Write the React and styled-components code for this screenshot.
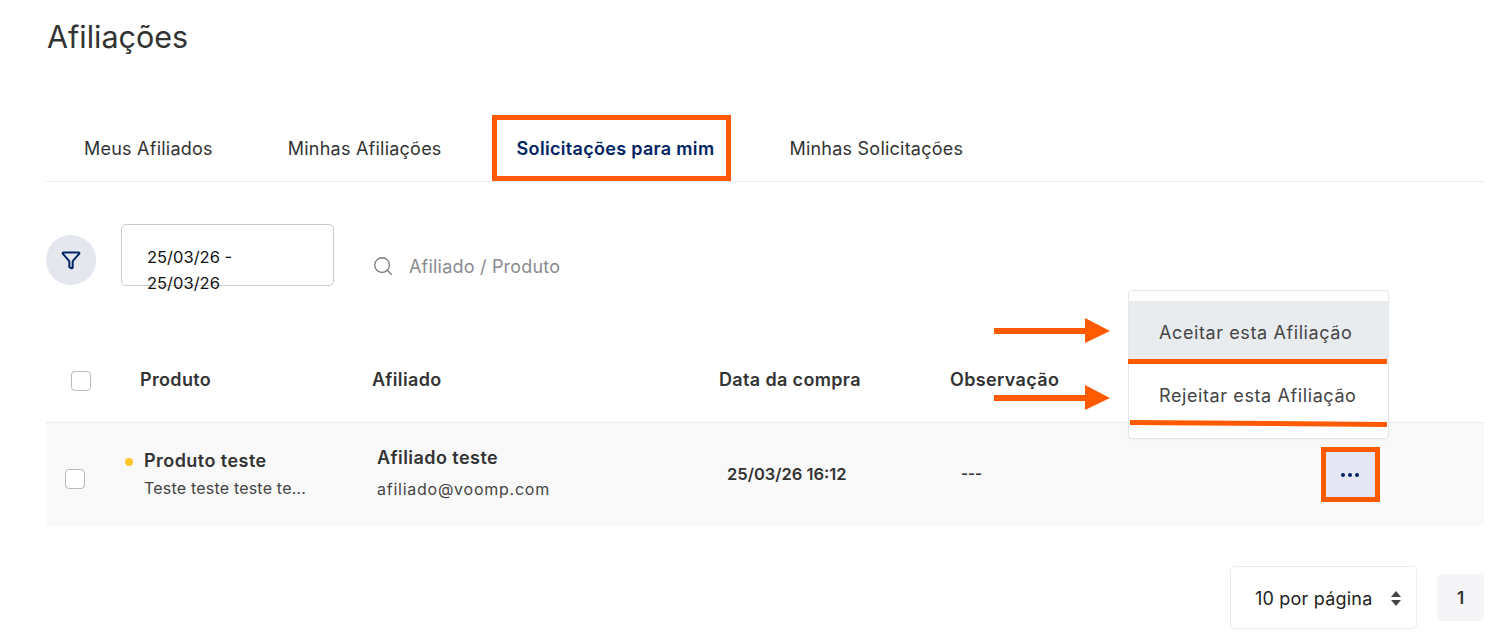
import React from "react";
import styled, { createGlobalStyle } from "styled-components";
import { Filter, Search } from "lucide-react";

const GlobalStyle = createGlobalStyle`
  html, body {
    margin: 0;
    background: #fff;
    font-family: "Inter", "Noto Sans", sans-serif;
    color: #333;
  }
  * { box-sizing: border-box; }
`;

const ORANGE = "#ff5a00";
const NAVY = "#002363";

const Page = styled.div`
  padding: 0 16px 12px 46px;
  height: 641px;
  overflow: hidden;
`;

const Title = styled.h1`
  margin: 0;
  padding: 1px 0 0 1px;
  height: 115px;
  font-size: 30.5px;
  line-height: 72px;
  font-weight: 400;
  color: #333;
`;

const Tabs = styled.nav`
  display: flex;
  height: 67px;
  border-bottom: 1px solid #ededf0;
`;

const Tab = styled.div`
  position: relative;
  display: flex;
  align-items: center;
  padding: 0 38px 0 ${(p) => (p.$first ? 38 : 37)}px;
  font-size: 18px;
  font-weight: ${(p) => (p.$active ? 600 : 400)};
  color: ${(p) => (p.$active ? NAVY : "#333")};
  letter-spacing: ${(p) => (p.$active ? "0.31px" : "0.23px")};
  white-space: nowrap;
`;

const Highlight = styled.span`
  position: absolute;
  border: 5px solid ${ORANGE};
  pointer-events: none;
`;

const TabHighlight = styled(Highlight)`
  left: 12px;
  right: 21px;
  top: 0;
  bottom: 0;
`;

const FilterRow = styled.div`
  display: flex;
  align-items: flex-start;
  margin-top: 42px;
  height: 62px;
`;

const FilterButton = styled.button`
  display: flex;
  align-items: center;
  justify-content: center;
  width: 50px;
  height: 50px;
  margin: 11px 25px 0 0;
  padding: 0;
  border: 0;
  border-radius: 50%;
  background: #e5e7ef;
  color: ${NAVY};
`;

const DateBox = styled.div`
  width: 213px;
  height: 62px;
  padding: 19px 60px 0 25px;
  border: 1px solid #ccc;
  border-radius: 5px;
  font-size: 16.5px;
  line-height: 26px;
  color: #111;
`;

const SearchBox = styled.div`
  display: flex;
  align-items: center;
  gap: 15px;
  margin: 29px 0 0 38px;
  padding-top: 2px;
  font-size: 18px;
  letter-spacing: 0.2px;
  color: #8a8a8f;
`;

const HeaderRow = styled.div`
  display: grid;
  grid-template-columns: 94px 232px 347px 231px 1fr;
  align-items: center;
  height: 74px;
  margin-top: 62px;
  padding-bottom: 12px;
  font-size: 18px;
  letter-spacing: 0.35px;
  font-weight: 600;
  color: #333;
`;

const Check = styled.span`
  display: block;
  width: 20px;
  height: 20px;
  border: 1px solid #b5b9c4;
  border-radius: 4px;
  background: #fff;
`;

const HeaderCheck = styled(Check)`
  margin: 4px 0 0 25px;
`;

const BodyRow = styled.div`
  position: relative;
  display: grid;
  grid-template-columns: 79px 252px 350px 233px 1fr 160px;
  align-items: center;
  height: 104px;
  background: #f9f9f9;
  border-top: 1px solid #ebebeb;
`;

const BodyCheck = styled(Check)`
  margin: 9px 0 0 19px;
`;

const ProductCell = styled.div`
  position: relative;
  padding-left: 19px;
`;

const Dot = styled.span`
  position: absolute;
  left: 0;
  top: 9px;
  width: 8px;
  height: 8px;
  border-radius: 50%;
  background: #ffc52e;
`;

const AffiliateCell = styled.div`
  padding-bottom: 3px;
`;

const CellTitle = styled.div`
  font-size: 18px;
  line-height: 24px;
  letter-spacing: 0.45px;
  font-weight: 600;
  color: #333;
`;

const CellSub = styled.div`
  margin-top: ${(p) => p.$gap}px;
  font-size: 16px;
  line-height: 24px;
  letter-spacing: ${(p) => p.$spacing}px;
  color: #444;
`;

const DateCell = styled.div`
  padding-bottom: 2px;
  font-size: 16.5px;
  font-weight: 600;
  color: #333;
`;

const NoteCell = styled.div`
  padding: 0 0 2px 1px;
  font-size: 15px;
  font-weight: 600;
  color: #333;
`;

const MoreButton = styled.button`
  position: relative;
  display: flex;
  align-items: center;
  justify-content: center;
  width: 52px;
  height: 50px;
  padding: 0;
  border: 0;
  background: #e4e6f4;
  color: ${NAVY};
`;

const MoreHighlight = styled(Highlight)`
  inset: -3px -4px -2px -3px;
`;

const Menu = styled.div`
  position: absolute;
  top: -133px;
  right: 95px;
  width: 261px;
  height: 149px;
  padding-top: 10px;
  background: #fff;
  border: 1px solid #e6e6e6;
  border-radius: 4px;
  box-shadow: 0 1px 2px rgba(0, 0, 0, 0.04);
`;

const MenuItem = styled.div`
  position: relative;
  display: flex;
  align-items: center;
  height: ${(p) => (p.$hover ? 63 : 62)}px;
  padding-left: 30px;
  font-size: 18px;
  letter-spacing: 0.6px;
  color: #444;
  background: ${(p) => (p.$hover ? "#e9ecef" : "transparent")};
`;

const Underline = styled.span`
  position: absolute;
  left: ${(p) => (p.$tilted ? 1 : -1)}px;
  right: 1px;
  bottom: 0;
  height: 5px;
  background: ${ORANGE};
  transform: rotate(${(p) => (p.$tilted ? 0.4 : 0)}deg);
`;

const ArrowMark = styled.svg`
  position: absolute;
  left: -135px;
  top: ${(p) => p.$top}px;
  width: 117px;
  height: 26px;
`;

const Footer = styled.div`
  display: flex;
  align-items: center;
  justify-content: flex-end;
  gap: 20px;
  margin-top: 40px;
`;

const PerPage = styled.div`
  display: flex;
  align-items: center;
  justify-content: space-between;
  width: 187px;
  height: 63px;
  padding: 2px 14px 0 24px;
  border: 1px solid #ececec;
  border-radius: 5px;
  font-size: 18px;
  letter-spacing: 0.2px;
  color: #222;
`;

const PageNumber = styled.div`
  display: flex;
  align-items: center;
  justify-content: center;
  width: 47px;
  height: 47px;
  border-radius: 5px;
  background: #f5f5f7;
  font-size: 17px;
  font-weight: 600;
  color: #333;
`;

const Arrow = ({ top }) => (
  <ArrowMark $top={top} viewBox="0 0 117 26">
    <rect x="0" y="10" width="92" height="6" fill={ORANGE} />
    <polygon points="91,0 116,13 91,25" fill={ORANGE} />
  </ArrowMark>
);

const tabs = ["Meus Afiliados", "Minhas Afiliações", "Solicitações para mim", "Minhas Solicitações"];

export default function App() {
  return (
    <Page>
      <GlobalStyle />
      <Title>Afiliações</Title>

      <Tabs>
        {tabs.map((tab, i) => (
          <Tab key={tab} $first={i === 0} $active={i === 2}>
            {tab}
            {i === 2 && <TabHighlight />}
          </Tab>
        ))}
      </Tabs>

      <FilterRow>
        <FilterButton>
          <Filter size={20} strokeWidth={2.4} />
        </FilterButton>
        <DateBox>25/03/26 - 25/03/26</DateBox>
        <SearchBox>
          <Search size={22} strokeWidth={1.4} color="#777" />
          Afiliado / Produto
        </SearchBox>
      </FilterRow>

      <HeaderRow>
        <HeaderCheck />
        <div>Produto</div>
        <div>Afiliado</div>
        <div>Data da compra</div>
        <div>Observação</div>
      </HeaderRow>

      <BodyRow>
        <BodyCheck />
        <ProductCell>
          <Dot />
          <CellTitle>Produto teste</CellTitle>
          <CellSub $gap={3} $spacing={0.2}>Teste teste teste te...</CellSub>
        </ProductCell>
        <AffiliateCell>
          <CellTitle>Afiliado teste</CellTitle>
          <CellSub $gap={7} $spacing={0.75}>afiliado@voomp.com</CellSub>
        </AffiliateCell>
        <DateCell>25/03/26 16:12</DateCell>
        <NoteCell>---</NoteCell>
        <MoreButton>
          <svg width="20" height="6" viewBox="0 0 20 6">
            <circle cx="3" cy="3" r="2" fill={NAVY} />
            <circle cx="10" cy="3" r="2" fill={NAVY} />
            <circle cx="17" cy="3" r="2" fill={NAVY} />
          </svg>
          <MoreHighlight />
        </MoreButton>

        <Menu>
          <Arrow top={27} />
          <Arrow top={94} />
          <MenuItem $hover>
            Aceitar esta Afiliação
            <Underline />
          </MenuItem>
          <MenuItem>
            Rejeitar esta Afiliação
            <Underline $tilted />
          </MenuItem>
        </Menu>
      </BodyRow>

      <Footer>
        <PerPage>
          10 por página
          <svg width="12" height="17" viewBox="0 0 12 17">
            <polygon points="6,1 11,7 1,7" fill="#444" />
            <polygon points="1,10 11,10 6,16" fill="#444" />
          </svg>
        </PerPage>
        <PageNumber>1</PageNumber>
      </Footer>
    </Page>
  );
}
